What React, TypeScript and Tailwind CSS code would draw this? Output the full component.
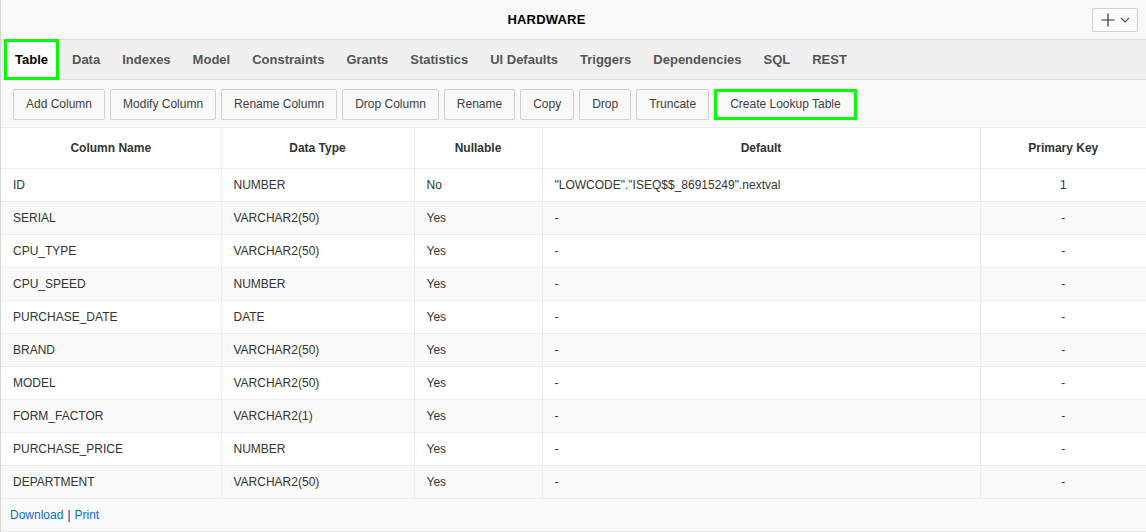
import React from 'react';

const tabs = ['Table', 'Data', 'Indexes', 'Model', 'Constraints', 'Grants', 'Statistics', 'UI Defaults', 'Triggers', 'Dependencies', 'SQL', 'REST'];

const actions = ['Add Column', 'Modify Column', 'Rename Column', 'Drop Column', 'Rename', 'Copy', 'Drop', 'Truncate'];

const rows = [
  ['ID', 'NUMBER', 'No', '"LOWCODE"."ISEQ$$_86915249".nextval', '1'],
  ['SERIAL', 'VARCHAR2(50)', 'Yes', '-', '-'],
  ['CPU_TYPE', 'VARCHAR2(50)', 'Yes', '-', '-'],
  ['CPU_SPEED', 'NUMBER', 'Yes', '-', '-'],
  ['PURCHASE_DATE', 'DATE', 'Yes', '-', '-'],
  ['BRAND', 'VARCHAR2(50)', 'Yes', '-', '-'],
  ['MODEL', 'VARCHAR2(50)', 'Yes', '-', '-'],
  ['FORM_FACTOR', 'VARCHAR2(1)', 'Yes', '-', '-'],
  ['PURCHASE_PRICE', 'NUMBER', 'Yes', '-', '-'],
  ['DEPARTMENT', 'VARCHAR2(50)', 'Yes', '-', '-'],
];

export default function App() {
  return (
    <main className="w-[1146px] h-[532px] bg-[#f9f9f9] border-l border-[#d6d6d6] text-[#333] font-['Liberation_Sans',Arial,sans-serif] overflow-hidden">
      {/* title bar */}
      <header className="h-[39px] flex items-center bg-[#f9f9f9]">
        <h1 className="flex-1 text-center text-[13px] font-bold text-black tracking-[0.2px]">HARDWARE</h1>
        <button className="mr-[8px] w-[46px] h-[24px] border border-[#d0d0d0] rounded-[2px] bg-[#fafafa] flex items-center justify-center gap-[5px]">
          <svg width="14" height="14" viewBox="0 0 14 14" stroke="#333" strokeWidth="1.2">
            <path d="M7 0.5v13M0.5 7h13" />
          </svg>
          <svg width="10" height="6" viewBox="0 0 10 6" fill="none" stroke="#555" strokeWidth="1.1">
            <path d="M1 1l4 4 4-4" />
          </svg>
        </button>
      </header>

      {/* tabs */}
      <nav className="h-[41px] bg-[#f0f0f0] border-y border-[#dcdcdc] flex items-stretch pl-[3px]">
        {tabs.map((t, i) =>
          i === 0 ? (
            <div key={t} className="-my-px mr-[2px] px-[8px] flex items-center bg-white border-[3px] border-[#00ff00] text-[13px] font-bold text-black">
              {t}
            </div>
          ) : (
            <div key={t} className="px-[11px] flex items-center text-[13px] font-bold text-[#555]">
              {t}
            </div>
          )
        )}
      </nav>

      {/* toolbar */}
      <div className="h-[47px] flex items-center gap-[5px] pl-[12px] pt-[1px]">
        {actions.map((a) => (
          <button key={a} className="h-[31px] px-[12px] border border-[#d0d0d0] rounded-[2px] bg-[#f9f9f9] text-[12px] text-[#404040]">
            {a}
          </button>
        ))}
        <button className="h-[31px] px-[13px] border-[3px] border-[#00ff00] bg-[#f9f9f9] text-[12px] text-[#404040]">
          Create Lookup Table
        </button>
      </div>

      {/* columns */}
      <table className="w-[1145px] table-fixed border-collapse text-[12px]">
        <colgroup>
          <col className="w-[220px]" />
          <col className="w-[193px]" />
          <col className="w-[128px]" />
          <col className="w-[438px]" />
          <col />
        </colgroup>
        <thead>
          <tr className="h-[41px] bg-white">
            {['Column Name', 'Data Type', 'Nullable', 'Default', 'Primary Key'].map((h) => (
              <th key={h} className="font-bold text-center text-[#333] border border-[#ececec] border-l-0 last:border-r-0">
                {h}
              </th>
            ))}
          </tr>
        </thead>
        <tbody>
          {rows.map((r, i) => (
            <tr key={r[0]} className={i % 2 === 0 ? 'h-[33px] bg-white' : 'h-[33px] bg-[#f9f9f9]'}>
              {r.map((c, j) => (
                <td
                  key={j}
                  className={
                    j === 4
                      ? 'text-center border border-[#ececec] border-r-0'
                      : j === 0
                      ? 'px-[12px] border border-[#ececec] border-l-0'
                      : 'px-[12px] border border-[#ececec]'
                  }
                >
                  {c}
                </td>
              ))}
            </tr>
          ))}
        </tbody>
      </table>

      <footer className="h-[33px] flex items-center pl-[9px] border-b border-[#e6e6e6] text-[12px]">
        <a className="text-[#0572ce]">Download</a>
        <span className="mx-[4px] text-[#1a1a8a]">|</span>
        <a className="text-[#0572ce]">Print</a>
      </footer>
    </main>
  );
}
